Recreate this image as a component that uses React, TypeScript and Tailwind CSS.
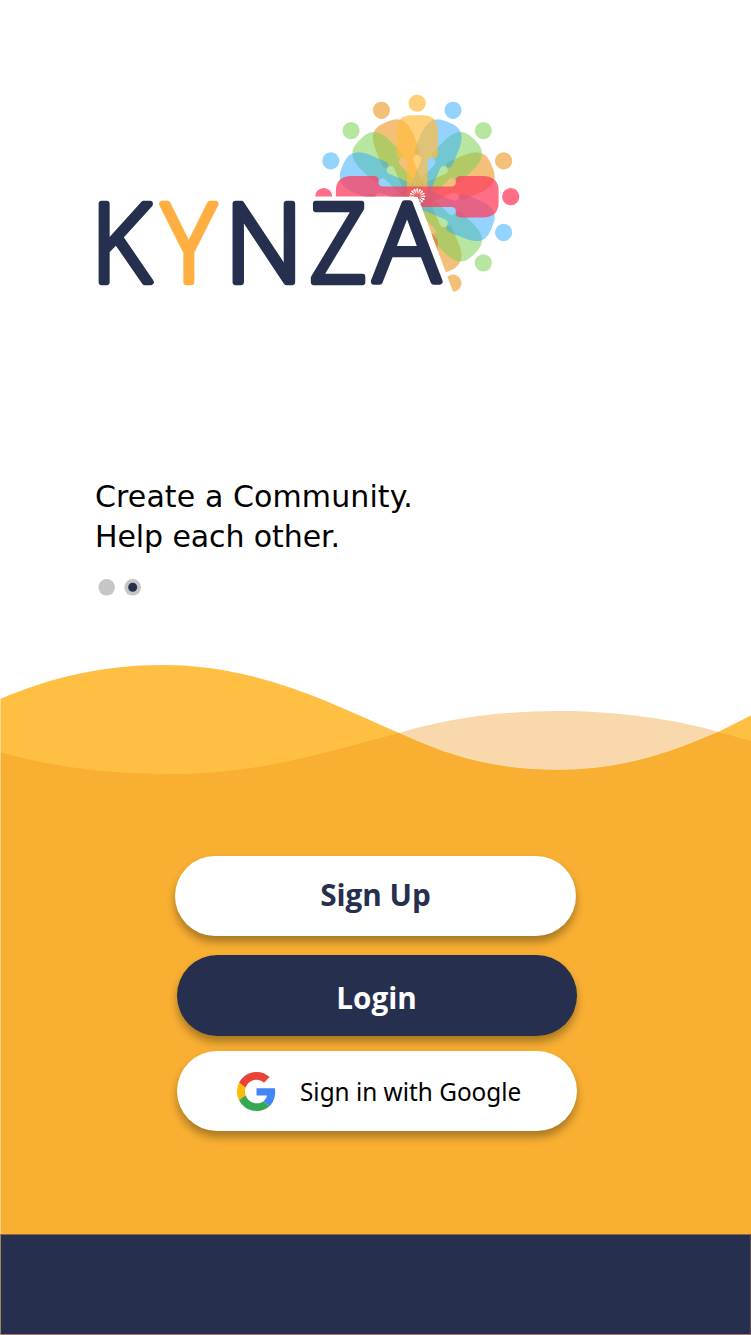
import React from "react";

const FIGURE =
  "M-10.3 0V-35Q-11-39-15-38.6Q-20.7-37.5-20.7-44V-65.5Q-20.7-81.4-5.5-81.4H5.5Q20.7-81.4 20.7-65.5V-44Q20.7-37.5 15-38.6Q11-39 10.3-35V0Z";

const ROUND_FIGURE =
  "M-10.3 0V-35Q-11-39-15-38.6Q-20.7-37.5-20.4-44V-61.5Q-19.6-80.8-3-80.8H3Q19.6-80.8 20.4-61.5V-44Q20.7-37.5 15-38.6Q11-39 10.3-35V0Z";

const COLORS = {
  orange: { fill: "#ed9620", opacity: 0.6 },
  green: { fill: "#7fd257", opacity: 0.56 },
  blue: { fill: "#31a9ff", opacity: 0.514 },
  yellow: { fill: "#ffbd3f", opacity: 0.71 },
  red: { fill: "#ff3d5c", opacity: 0.745 },
};

const FIGURES: { angle: number; color: keyof typeof COLORS }[] = [
  { angle: -22.5, color: "orange" },
  { angle: 67.5, color: "orange" },
  { angle: 157.5, color: "orange" },
  { angle: -112.5, color: "orange" },
  { angle: -45, color: "green" },
  { angle: 45, color: "green" },
  { angle: 135, color: "green" },
  { angle: -67.5, color: "blue" },
  { angle: 22.5, color: "blue" },
  { angle: 112.5, color: "blue" },
  { angle: 0, color: "yellow" },
  { angle: -90, color: "red" },
  { angle: 90, color: "red" },
];

const LETTERS = [
  { char: "K", x: 91.2, width: 59.6, fill: "#262f4e" },
  { char: "Y", x: 162, width: 53.5, fill: "#ffae42" },
  { char: "N", x: 224.8, width: 78.3, fill: "#262f4e" },
  { char: "Z", x: 310.1, width: 56.4, fill: "#262f4e" },
  { char: "A", x: 373.9, width: 65.5, fill: "#262f4e" },
];

function Logo() {
  return (
    <svg
      className="block h-[234px] w-[440px] overflow-visible"
      viewBox="87 91 440 234"
      role="img"
      aria-label="KYNZA"
    >
      <defs>
        <clipPath id="fan">
          <path d="M300 80H540V300H456L417.8 196.5H300Z" />
        </clipPath>
      </defs>
      <g clipPath="url(#fan)">
        {FIGURES.map(({ angle, color }) => (
          <g
            key={angle}
            transform={`translate(417.2 196.7) rotate(${angle})`}
            fill={COLORS[color].fill}
            fillOpacity={COLORS[color].opacity}
          >
            <path d={angle % 90 === 0 ? FIGURE : ROUND_FIGURE} />
            <circle cy="-93.5" r="8.6" />
          </g>
        ))}
        <path d="M433 234L437.6 240V254L430 232Z" fill="#ff5a30" fillOpacity="0.6" />
        {Array.from({ length: 16 }, (_, i) => (
          <path
            key={i}
            transform={`translate(417.2 196.4) rotate(${i * 22.5})`}
            d="M0-2.5L-.95-7Q0-9.4 .95-7Z"
            fill="#fff"
          />
        ))}
      </g>
      {LETTERS.map(({ char, x, width, fill }) => (
        <text
          key={char}
          x={x}
          y="282.2"
          textLength={width}
          lengthAdjust="spacingAndGlyphs"
          fill={fill}
          stroke={fill}
          strokeWidth="6.3"
          strokeLinejoin="round"
          className="font-['Open_Sans',sans-serif] text-[109.5px] font-light"
        >
          {char}
        </text>
      ))}
    </svg>
  );
}

function GoogleIcon() {
  return (
    <svg className="size-[39px]" viewBox="0 0 48 48" aria-hidden="true">
      <path fill="#ea4335" d="M24 9.5c3.54 0 6.71 1.22 9.21 3.6l6.85-6.85C35.9 2.38 30.47 0 24 0 14.62 0 6.51 5.38 2.56 13.22l7.98 6.19C12.43 13.72 17.74 9.5 24 9.5z" />
      <path fill="#4285f4" d="M46.98 24.55c0-1.57-.15-3.09-.38-4.55H24v9.02h12.94c-.58 2.96-2.26 5.48-4.78 7.18l7.73 6c4.51-4.18 7.09-10.36 7.09-17.65z" />
      <path fill="#fbbc05" d="M10.53 28.59c-.48-1.45-.76-2.99-.76-4.59s.27-3.14.76-4.59l-7.98-6.19C.92 16.46 0 20.12 0 24c0 3.88.92 7.54 2.56 10.78l7.97-6.19z" />
      <path fill="#34a853" d="M24 48c6.48 0 11.93-2.13 15.89-5.81l-7.73-6c-2.15 1.45-4.92 2.3-8.16 2.3-6.26 0-11.57-4.22-13.47-9.91l-7.98 6.19C6.51 42.62 14.62 48 24 48z" />
    </svg>
  );
}

export default function App() {
  return (
    <main className="flex h-[1335px] w-[751px] flex-col overflow-hidden bg-white">
      <header className="h-[665px] pt-[91px] pl-[87px]">
        <Logo />
        <p className="mt-[152px] ml-[8px] font-['DejaVu_Sans',sans-serif] text-[30px] leading-[40px] tracking-[0.1px] text-black">
          Create a Community.
          <br />
          <span className="tracking-[-0.1px]">Help each other.</span>
        </p>
        <svg className="mt-[21px] ml-[11px] block h-[18px] w-[44px]" viewBox="0 0 44 18" aria-hidden="true">
          <circle cx="8.7" cy="9.3" r="8.3" fill="#c6c6c6" />
          <circle cx="34.7" cy="9.3" r="8.3" fill="#c6c6c6" />
          <circle cx="34.7" cy="9.3" r="4.5" fill="#262f4e" />
        </svg>
      </header>
      <svg className="block h-[125px] w-[751px] shrink-0" viewBox="0 665 751 125" aria-hidden="true">
        <path fill="#f9d8ab" d="M399 733C445 719 500 711 558 711C615 711 675 719 718 732V780H399Z" />
        <path fill="#ffbf43" d="M0 699C52 677 104 665 162 665C258 665 330 703 399 733C450 757 497 770 558 770C615 770 664 756 718 732L751 715.5V790H0Z" />
        <path fill="#f9af32" d="M0 752C48 766 106 774 170 774C260 774 326 752 399 733C450 757 497 770 558 770C615 770 664 756 718 732L751 741V791H0Z" />
        <path fill="#fff" fillOpacity="0.45" d="M0 698H1V790H0Z" />
      </svg>
      <section className="flex h-[444px] flex-col items-center border-l border-[#fcd38e] bg-[#f9af32] pt-[65.5px]">
        <button className="mr-px h-[80.5px] w-[400.5px] shrink-0 rounded-full bg-white font-['Open_Sans',sans-serif] text-[29.7px] font-bold text-[#262f4e] shadow-[0_6px_9px_rgba(0,0,0,0.32)]">
          Sign Up
        </button>
        <button className="mt-[19px] ml-[2px] h-[80.5px] w-[400.5px] shrink-0 rounded-full bg-[#262f4e] pt-[7px] pr-px font-['Open_Sans',sans-serif] text-[29.7px] font-bold text-white shadow-[0_6px_9px_rgba(0,0,0,0.32)]">
          Login
        </button>
        <button className="mt-[15.5px] ml-[2px] flex h-20 w-[400px] shrink-0 items-center rounded-full bg-white pl-[60px] shadow-[0_6px_9px_rgba(0,0,0,0.32)]">
          <GoogleIcon />
          <span className="ml-[24px] origin-left scale-x-[0.936] font-['Noto_Sans',sans-serif] text-[26px] whitespace-nowrap text-black">
            Sign in with Google
          </span>
        </button>
      </section>
      <footer className="h-[101px] border border-t-[#89693f] border-r-[#5b4f4f] border-b-[#9b8268] border-l-[#a08561] bg-[#262f4e]" />
    </main>
  );
}
